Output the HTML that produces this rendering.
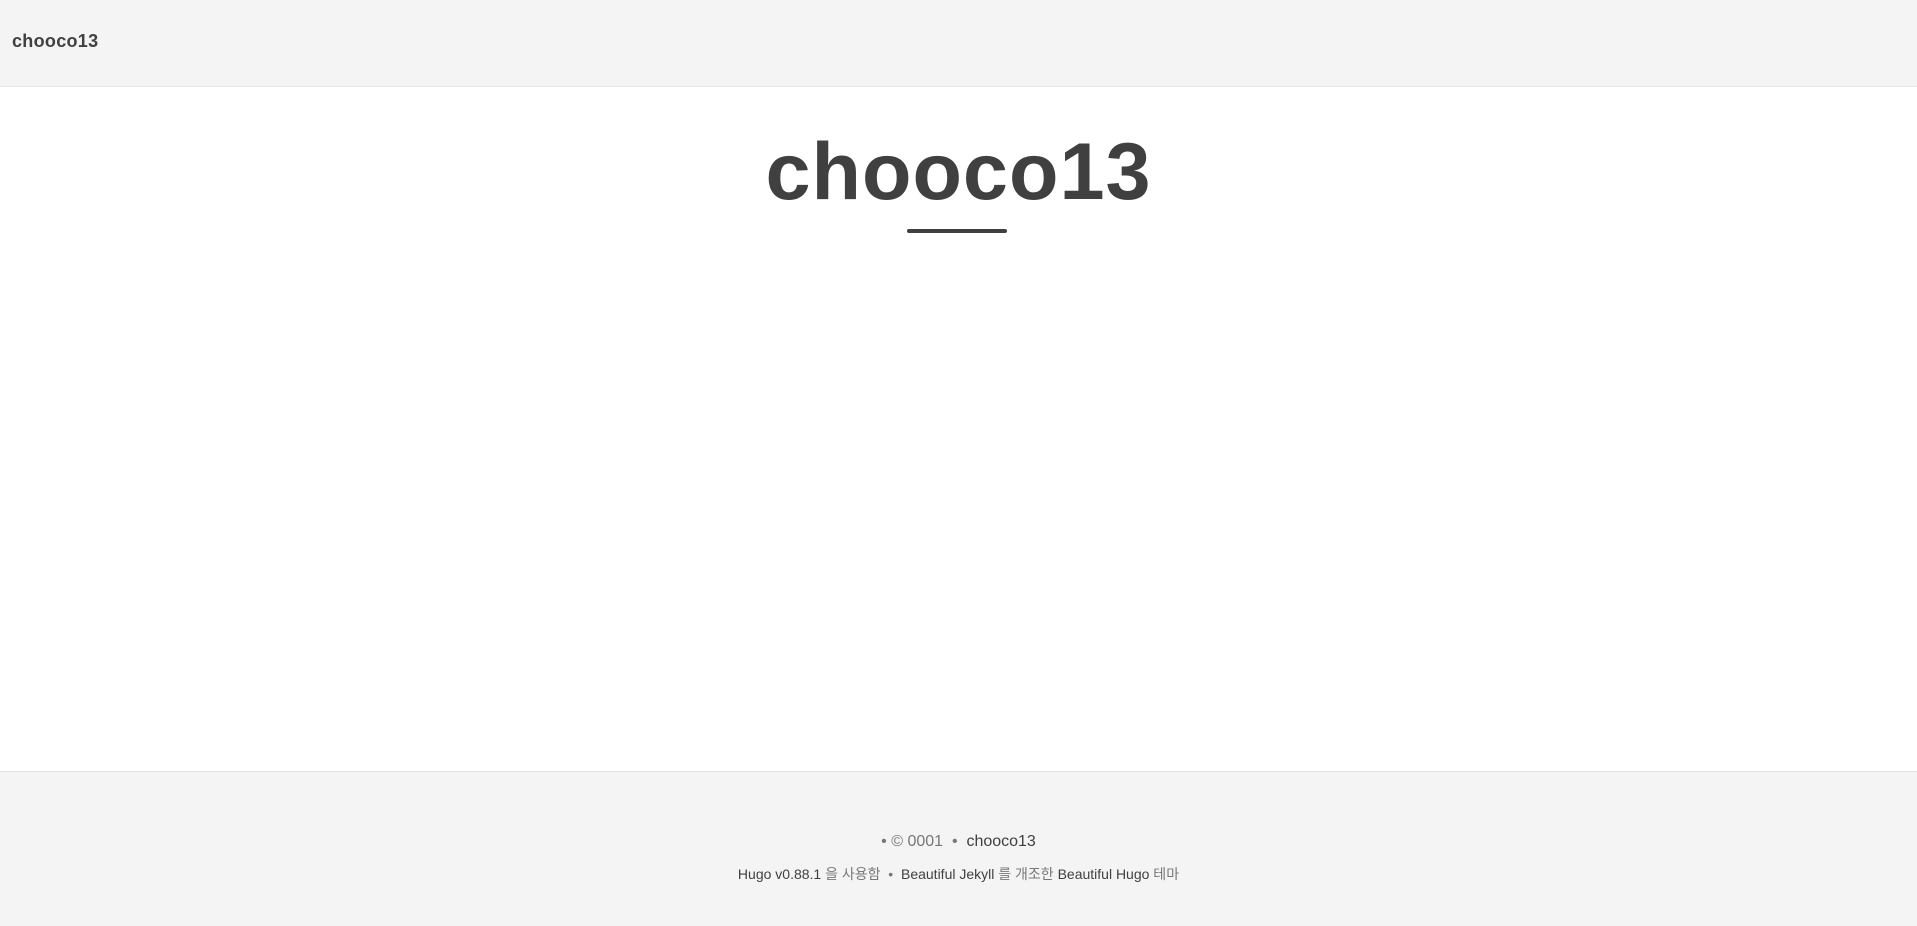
<!DOCTYPE html>
<html><head><meta charset="utf-8"><style>
html,body{margin:0;padding:0;width:1917px;height:925px;overflow:hidden;background:#fff;font-family:"Liberation Sans","Noto Sans CJK KR",sans-serif;color:#404040}
.nav{position:absolute;left:0;top:0;width:1917px;height:86px;background:#f4f4f4;border-bottom:1px solid #e6e6e6}
.brand{position:absolute;left:12px;top:30px;font-size:18px;font-weight:bold;color:#404040;line-height:22px;letter-spacing:0.3px}
h1{position:absolute;left:0;width:1917px;top:122px;margin:0;text-align:center;font-size:81px;font-weight:bold;line-height:100px;color:#404040;letter-spacing:1px}
.bar{position:absolute;left:907px;top:229px;width:100px;height:4px;border-radius:2px;background:#404040}
.foot{position:absolute;left:0;top:771px;width:1917px;height:154px;background:#f4f4f4;border-top:1px solid #e3e3e3}
.l1{position:absolute;left:0;width:1917px;top:60px;text-align:center;font-size:16px;color:#777;line-height:20px}
.l1 b{font-weight:normal;color:#404040}
.l2{position:absolute;left:0;width:1917px;top:93px;text-align:center;font-size:14px;color:#777;line-height:18px}
.l2 b{font-weight:normal;color:#404040}
</style></head><body>
<div class="nav"><div class="brand">chooco13</div></div>
<h1>chooco13</h1>
<div class="bar"></div>
<div class="foot">
<div class="l1">• © 0001 &nbsp;• &nbsp;<b>chooco13</b></div>
<div class="l2"><b>Hugo v0.88.1</b> 을 사용함 &nbsp;• &nbsp;<b>Beautiful Jekyll</b> 를 개조한 <b>Beautiful Hugo</b> 테마</div>
</div>
</body></html>
